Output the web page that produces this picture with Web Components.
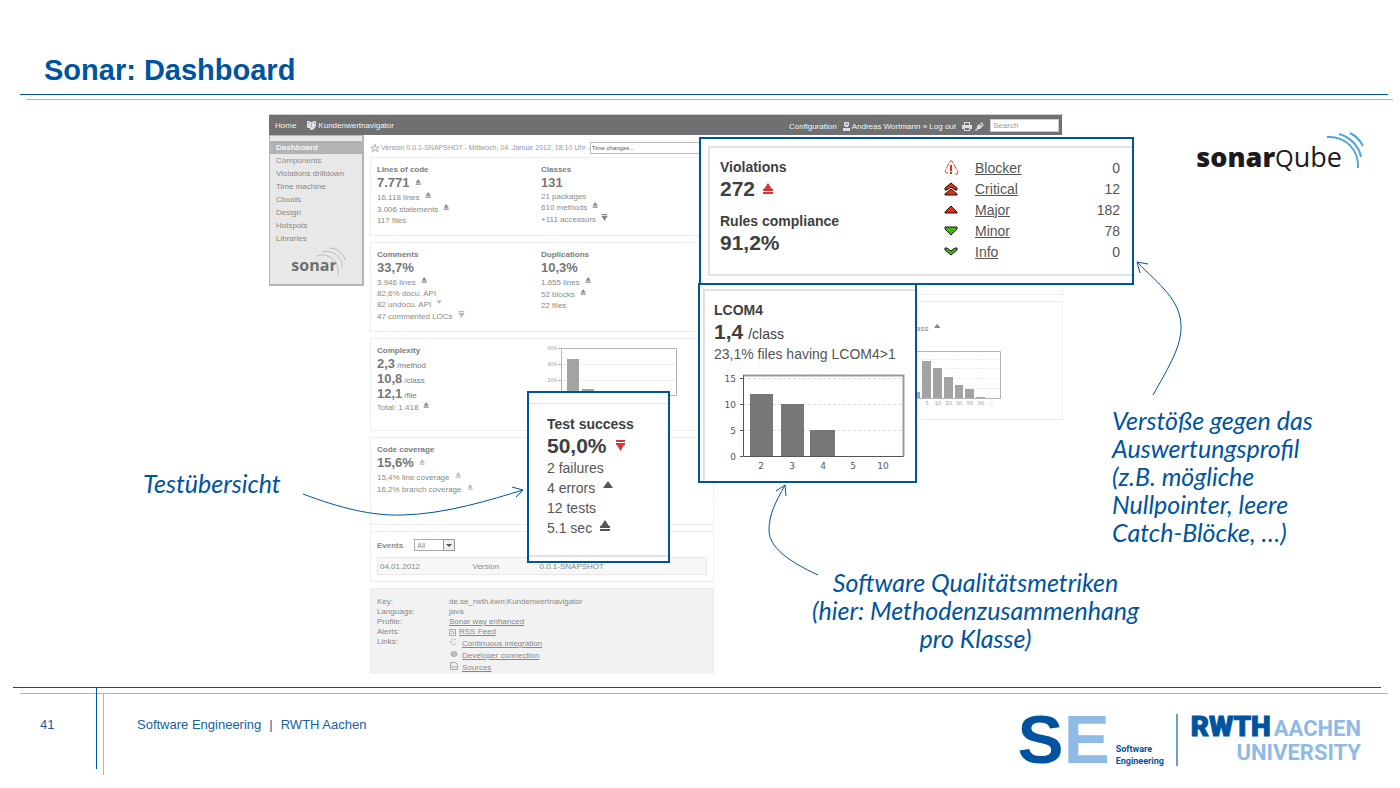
<!DOCTYPE html>
<html lang="de">
<head>
<meta charset="utf-8">
<title>Sonar: Dashboard</title>
<style>
  body { margin: 0; background: #fff; font-family: "Liberation Sans", Arial, sans-serif; color: #777; }
</style>
</head>
<body>
<slide-page></slide-page>

<script>
const define = (name, html, setup) => {
  const template = document.createElement('template');
  template.innerHTML = html;
  customElements.define(name, class extends HTMLElement {
    constructor() {
      super();
      this.attachShadow({ mode: 'open' }).append(template.content.cloneNode(true));
    }
    connectedCallback() { if (setup) setup(this, this.shadowRoot); }
  });
};

/* Trend triangle: direction and number of bars */
const trendShapes = {
  up: '<path d="M5 1 10 8H0z"/>',
  up1: '<path d="M5 0 9 6H1zM1 7h8v2H1z"/>',
  up2: '<path d="M5 0 9 6H1zM0 6h10v2H0zM0 9h10v2H0z"/>',
  down: '<path d="M1 2h8L5 8z"/>',
  down2: '<path d="M1 0h9v2H1zM1 3h9v2H1zM2 5h7L5.500 11z"/>'
};
define('trend-mark', `
<style>:host{display:block;width:var(--mark,7px);height:var(--mark,7px)}svg{display:block;width:100%;height:100%;fill:currentColor}</style>
<svg viewBox="0 0 11 11" aria-hidden="true"></svg>`, (el, root) => {
  root.querySelector('svg').innerHTML = trendShapes[el.getAttribute('kind')] || '';
});

/* One measure line: big value or plain text, with an optional trend */
define('measure-line', `
<style>
:host{display:flex;align-items:center;gap:var(--row-gap,5px);height:var(--row,10px);font-size:var(--text,8px);white-space:nowrap}
:host([trend]){height:var(--row-trend,12px)}
:host([big]){height:var(--row-big,14px);margin-bottom:2px;color:var(--strong,#777)}
:host([stacked]){height:15px;margin-bottom:0}
:host([big]) .value{font-size:var(--big,13px);font-weight:bold}
.unit:empty{display:none}
.copy{display:flex;align-items:baseline;gap:var(--unit-gap,2px)}
trend-mark{margin-bottom:var(--lift,3px);color:var(--trend,#888)}
:host([big]) trend-mark{margin-bottom:0}
:host([tone=red]) trend-mark{color:#d2383c}
:host([tone=pale]) trend-mark{color:#bbb}
</style>
<span class="copy"><span class="value"><slot></slot></span><span class="unit"></span></span>`, (el, root) => {
  root.querySelector('.unit').textContent = el.getAttribute('unit') || '';
  if (el.hasAttribute('trend') && !root.querySelector('trend-mark')) {
    const mark = document.createElement('trend-mark');
    mark.setAttribute('kind', el.getAttribute('trend'));
    root.append(mark);
  }
});

define('measure-group', `
<style>
:host{display:block;min-width:0}
h3{margin:0;font-size:var(--text,8px);line-height:var(--title-row,10px);font-weight:bold;color:var(--strong,#7c7c7c);white-space:nowrap}
</style>
<h3></h3><slot></slot>`, (el, root) => {
  root.querySelector('h3').textContent = el.getAttribute('label');
});

define('metric-box', `
<style>
:host{display:grid;grid-template-columns:164px 1fr;align-items:start;box-sizing:border-box;padding:7px 6px 5px;border:1px solid #eee;background:#fff;color:#8a8a8a}
</style><slot></slot>`);

define('complexity-chart', `
<style>:host{display:block}svg{display:block}text{font:5px "DejaVu Sans",sans-serif;fill:#999;text-anchor:end}</style>
<svg width="140" height="64" viewBox="0 1 140 64" role="img" aria-label="Complexity distribution">
<path d="M20 19.5h116M20 35.5h116" stroke="#ececec" stroke-dasharray="2 1"/>
<path d="M26 14h12v37H26zM41 44h12v7H41z" fill="#a3a3a3"/>
<path d="M20.500 3.500h115v47h-115zM17 3.500h3M17 19.500h3M17 35.500h3" fill="none" stroke="#b5b5b5"/>
<text x="16" y="5">600</text><text x="16" y="21">400</text><text x="16" y="37">200</text>
</svg>`);

define('class-chart', `
<style>:host{display:block}svg{display:block}text{font:5px "DejaVu Sans",sans-serif;fill:#999;text-anchor:middle}</style>
<svg width="110" height="60" viewBox="0 0 110 60" role="img" aria-label="Complexity per class">
<path d="M0 9.500h108M0 18.500h108M0 28.500h108M0 38.500h108" stroke="#ececec" stroke-dasharray="2 1"/>
<path d="M20 42h8v6h-8zM30 11h9v37h-9zM41 18h9v30h-9zM52 27h9v21h-9zM63 35h8v13h-8zM73 39h9v9h-9zM84 47h9v1h-9z" fill="#a3a3a3"/>
<path d="M.500 1.500h108v47H.500z" fill="none" stroke="#b5b5b5"/>
<text x="24" y="55">3</text><text x="35" y="55">5</text><text x="46" y="55">10</text><text x="57" y="55">20</text><text x="67" y="55">30</text><text x="78" y="55">50</text><text x="89" y="55">90</text><text x="99" y="55">...</text>
</svg>`);

define('cohesion-chart', `
<style>:host{display:block;margin-top:1px}svg{display:block}text{font:9px "DejaVu Sans",sans-serif;fill:#555}.y{text-anchor:end}.x{text-anchor:middle}</style>
<svg width="192" height="108" viewBox="0 0 192 108" role="img" aria-label="LCOM4 distribution">
<path d="M29 14.500h160M29 40.500h160M29 66.500h160" stroke="#ddd" stroke-dasharray="3 2"/>
<path d="M36 30h23v62H36zM67 40h23v52H67zM96 66h25v26H96z" fill="#777"/>
<path d="M29.500 11.500h160v81" fill="none" stroke="#999" stroke-width="2"/>
<path d="M29.500 11v81.500h160M26 14.500h3M26 40.500h3M26 66.500h3M26 92.500h3" fill="none" stroke="#555"/>
<g class="y"><text x="22" y="18">15</text><text x="22" y="44">10</text><text x="22" y="70">5</text><text x="22" y="96">0</text></g>
<g class="x"><text x="47" y="105">2</text><text x="78" y="105">3</text><text x="109" y="105">4</text><text x="139" y="105">5</text><text x="169" y="105">10</text></g>
</svg>`);

define('app-bar', `
<style>
:host{display:flex;align-items:center;box-sizing:border-box;height:20px;padding:0 3px 0 6px;background:#707070;color:#f4f4f4;font-size:8px;white-space:nowrap}
nav,.tools{display:flex;align-items:center}
nav{gap:11px;flex:1}
a{color:inherit;text-decoration:none;display:flex;align-items:center;gap:2px}
svg{display:block;fill:#ddd}
.user{margin-left:6px}
.tools{gap:3px;margin:2px 6px 0 6px}
.account{display:flex;align-items:center;margin-top:2px}
input{box-sizing:border-box;width:69px;height:13px;margin:0;padding:0 2px;border:1px solid #ccc;border-radius:0;background:#fff;font:8px "Liberation Sans",Arial,sans-serif}
input::placeholder{color:#999;opacity:1}
</style>
<nav aria-label="Projekt"><a href="#home">Home</a>
<a href="#projekt"><svg width="9" height="9" viewBox="0 0 9 9"><path d="M0 0h3v7H0zM3 1h3v8H3zM6 0h3v5L7 8H6z"/><path d="M1 2h1M4 3h1M4 5h1M7 2h1" stroke="#777"/></svg>Kundenwertnavigator</a></nav>
<div class="account"><a href="#configuration">Configuration</a>
<a class="user" href="#user"><svg width="7" height="9" viewBox="0 0 7 9"><path d="M1 0h5v4H1zM0 6h7v3H0zM2 4h3v1H2z"/><path d="M2 2h3" stroke="#777"/></svg><span>Andreas Wortmann » Log out</span></a></div>
<div class="tools"><svg width="10" height="9" viewBox="0 0 10 9"><path d="M2 0h6v3h2v4H8v2H2V7H0V3h2z"/><path d="M3 1h4v2H3zM3 6h4v2H3z" fill="#707070"/></svg>
<svg width="9" height="9" viewBox="0 0 9 9"><path d="M4 2l3 3-2 2H3L2 6V4zM0 8l2-2 1 1-2 2zM5 2 7 0l1 1-2 2zM6 4l2-2 1 1-2 2z"/></svg></div>
<input type="search" placeholder="Search" aria-label="Search">`);

define('side-nav', `
<style>
:host{display:block;box-sizing:border-box;width:95px;height:151px;padding-top:5px;border:1px solid #b5b5b5;border-width:1px 2px 2px 1px;background:#e8e8e8;color:#888;font-size:8px}
a{display:block;padding:0 6px;line-height:13px;color:inherit;text-decoration:none;white-space:nowrap}
a[aria-current]{background:#b3b3b3;color:#f6f6f6;font-weight:bold}
.logo{display:flex;justify-content:center;padding:0 0 0 6px;height:30px;align-items:end;margin-top:2px}
b{font:bold 16px/24px "Open Sans","Noto Sans",sans-serif;color:#707070}
svg{flex:none;margin-left:-20px}
</style>
<nav aria-label="Bereiche"><a href="#dashboard" aria-current="page">Dashboard</a><a href="#components">Components</a><a href="#violations">Violations drilldown</a><a href="#time">Time machine</a><a href="#clouds">Clouds</a><a href="#design">Design</a><a href="#hotspots">Hotspots</a><a href="#libraries">Libraries</a></nav>
<div class="logo"><b>sonar</b><svg width="30" height="30" viewBox="0 0 30 30" fill="none" stroke="#bbb"><path d="M0 9C10 5 23 13 21 28M5 5C16 2 26 11 25 20M12 1C20 1 27 7 28 13"/></svg></div>`);

define('version-bar', `
<style>
:host{display:flex;align-items:center;height:13px;font-size:7px;color:#999;white-space:nowrap}
svg{margin-right:1px}
select{appearance:none;box-sizing:border-box;width:120px;height:12px;margin:0;padding:0 1px;border:1px solid #bbb;border-radius:0;background:#fff;color:#555;font:6px "Liberation Sans",Arial,sans-serif}
</style>
<svg width="10" height="10" viewBox="0 0 10 10" fill="#eee" stroke="#bbb"><path d="M5 1l1 3h3L7 6l1 3-3-2-3 2 1-3-2-2h3z"/></svg>
<label for="period">Version 0.0.1-SNAPSHOT - Mittwoch, 04. Januar 2012, 18:10 Uhr -</label>
<select id="period"><option>Time changes...</option></select>`);

define('events-box', `
<style>
:host{display:block;box-sizing:border-box;border:1px solid #eee;background:#fff;padding:6px;font-size:8px;color:#8a8a8a}
.head{display:flex;align-items:center;gap:11px;height:14px}
label{font-weight:bold}
.pick{display:grid}
.pick>*{grid-area:1/1}
select{appearance:none;box-sizing:border-box;width:41px;height:12px;margin:0;padding:0 2px;border:1px solid #aaa;border-radius:0;background:#fff;color:#888;font:7px "Liberation Sans",Arial,sans-serif}
svg{justify-self:end;pointer-events:none}
table{width:100%;height:18px;margin-top:5px;border-collapse:collapse;border:1px solid #e8e8e8;background:#f7f7f7}
td{padding:0 0 0 2px}
</style>
<div class="head"><label for="kind">Events</label><span class="pick"><select id="kind"><option>All</option></select><svg width="12" height="12" viewBox="0 0 12 12"><path d="M.500.500h11v11H.500z" fill="#eee" stroke="#999"/><path d="M3 5h6L6 8z" fill="#555"/></svg></span></div>
<table><colgroup><col style="width:93px"><col style="width:67px"><col></colgroup><tbody><tr><td>04.01.2012</td><td>Version</td><td>0.0.1-SNAPSHOT</td></tr></tbody></table>`);

define('project-info', `
<style>
:host{display:block;box-sizing:border-box;border:1px solid #ececec;border-bottom:0;background:#f2f2f2;padding:8px 6px 0;font-size:8px;line-height:10px;color:#888}
dl{display:grid;grid-template-columns:72px 1fr;margin:0}
dt,dd{margin:0}
a{color:inherit}
.icon{display:flex;align-items:center;gap:3px}
ul{list-style:none;margin:0;padding:1px 0 0 1px}
li{display:flex;gap:4px;height:12px;line-height:12px}
svg{flex:none;fill:#eee;stroke:#aaa}
</style>
<dl><dt>Key:</dt><dd>de.se_rwth.kwn:Kundenwertnavigator</dd>
<dt>Language:</dt><dd>java</dd>
<dt>Profile:</dt><dd><a href="#profile">Sonar way enhanced</a></dd>
<dt>Alerts:</dt><dd class="icon"><svg width="7" height="7" viewBox="0 0 7 7"><path d="M.500.500h6v6h-6zM2 2q3 0 3 3M2 4l1 1"/></svg><a href="#rss">RSS Feed</a></dd>
<dt>Links:</dt><dd><ul>
<li><svg width="8" height="8" viewBox="0 0 8 8"><path d="M6 2A3 3 0 1 0 6 6" stroke-dasharray="2 1"/></svg><a href="#ci">Continuous integration</a></li>
<li><svg width="8" height="8" viewBox="0 0 8 8"><ellipse cx="4" cy="4" rx="3" ry="2.500" fill="#ccc"/><path d="M1 4h6"/></svg><a href="#dev">Developer connection</a></li>
<li><svg width="8" height="8" viewBox="0 0 8 8"><path d="M.500.500h5l2 2v5h-7zM1 5h6"/></svg><a href="#sources">Sources</a></li></ul></dd></dl>`);

define('sonar-dashboard', `
<style>
:host{display:block;border-top:1px solid #ccc}
.bar{margin-right:1px}
.body{display:flex;gap:6px}
.content{flex:1;min-width:0;padding-top:6px}
.columns{display:grid;grid-template-columns:1fr 1fr;gap:6px;margin-top:3px}
.column{display:grid;gap:6px;align-content:start}
.h78{min-height:79px}.h90{min-height:90px}.h93{min-height:93px}.h88{min-height:88px}.h51{height:51px}.h86{height:86px}.h138{min-height:138px}.h120{min-height:119px}
.indent{padding:13px 0 0 160px}
.indent measure-line{margin-bottom:16px;justify-content:end;width:54px}
class-chart{margin-left:5px}
.wide{grid-template-columns:1fr}
</style>
<app-bar class="bar"></app-bar>
<div class="body"><side-nav></side-nav>
<div class="content"><version-bar></version-bar>
<div class="columns"><div class="column">
<metric-box class="h78"><measure-group label="Lines of code"><measure-line big trend="up1">7.771</measure-line><measure-line trend="up1">16.118 lines</measure-line><measure-line trend="up1">3.006 statements</measure-line><measure-line>117 files</measure-line></measure-group>
<measure-group label="Classes"><measure-line big>131</measure-line><measure-line>21 packages</measure-line><measure-line trend="up1">610 methods</measure-line><measure-line trend="down2">+111 accessors</measure-line></measure-group></metric-box>
<metric-box class="h90"><measure-group label="Comments"><measure-line big>33,7%</measure-line><measure-line trend="up1">3.946 lines</measure-line><measure-line>82,6% docu. API</measure-line><measure-line trend="down" tone="pale">82 undocu. API</measure-line><measure-line trend="down2" tone="pale">47 commented LOCs</measure-line></measure-group>
<measure-group label="Duplications"><measure-line big>10,3%</measure-line><measure-line trend="up1">1.655 lines</measure-line><measure-line trend="up1">52 blocks</measure-line><measure-line>22 files</measure-line></measure-group></metric-box>
<metric-box class="h93"><measure-group label="Complexity"><measure-line big stacked unit="/method">2,3</measure-line><measure-line big stacked unit="/class">10,8</measure-line><measure-line big stacked unit="/file">12,1</measure-line><measure-line trend="up1">Total: 1.418</measure-line></measure-group><complexity-chart></complexity-chart></metric-box>
<metric-box class="h88"><measure-group label="Code coverage"><measure-line big trend="up1" tone="pale">15,6%</measure-line><measure-line trend="up1" tone="pale">15,4% line coverage</measure-line><measure-line trend="up1" tone="pale">16,2% branch coverage</measure-line></measure-group></metric-box>
<events-box class="h51"></events-box>
<project-info class="h86"></project-info>
</div><div class="column">
<metric-box class="h138"></metric-box>
<metric-box class="h120 wide"><div class="indent"><measure-line trend="up">/class</measure-line><class-chart></class-chart></div></metric-box>
</div></div></div></div>`);

/* Blue-framed magnified detail lying over the dashboard */
define('callout-box', `
<style>
:host{position:absolute;box-sizing:border-box;overflow:hidden;border:2px solid #00549f;background:#fff;color:#555;
--text:14px;--title-row:20px;--row:18px;--row-trend:22px;--row-big:23px;--big:21px;--strong:#404040;--mark:11px;--row-gap:8px;--unit-gap:5px;--lift:6px;--trend:#555}
</style><slot></slot>`);

define('violations-panel', `
<style>
:host{display:flex;justify-content:space-between;box-sizing:border-box;height:130px;margin:7px 0 0 7px;padding:9px 12px 0 10px;border:solid #e2e2e2;border-width:2px 0 2px 2px;font-size:14px}
.left{display:grid;align-content:start;gap:9px}
table{border-collapse:collapse;width:176px;height:105px}
td{height:21px;padding:0;text-align:right}
th{padding:0;text-align:left;font-weight:normal}
td:first-child{width:31px}
a{color:inherit}
svg{display:block}
</style>
<div class="left"><measure-group label="Violations"><measure-line big trend="up2" tone="red">272</measure-line></measure-group>
<measure-group label="Rules compliance"><measure-line big>91,2%</measure-line></measure-group></div>
<table><tbody>
<tr><td><svg width="15" height="16" viewBox="0 0 15 16"><path d="M4 13H2L1 11 6 1h2l6 11-1 2h-2" fill="none" stroke="#e24a3b" stroke-dasharray="6 1"/><path d="M6 5h2v6H6zM6 12h2v2H6z" fill="#dc2c1c"/></svg></td><th scope="row"><a href="#blocker">Blocker</a></th><td>0</td></tr>
<tr><td><svg width="14" height="14" viewBox="0 0 14 14" fill="#e52e15" stroke="#151515"><path d="M7 1 1 6v2h2l4-3 4 3h2V6z"/><path d="M7 7 1 12v1h12v-1z"/></svg></td><th scope="row"><a href="#critical">Critical</a></th><td>12</td></tr>
<tr><td><svg width="14" height="14" viewBox="0 0 14 14" fill="#e52e15" stroke="#151515"><path d="M7 3 1 9v1h12V9z"/></svg></td><th scope="row"><a href="#major">Major</a></th><td>182</td></tr>
<tr><td><svg width="14" height="14" viewBox="0 0 14 14" fill="#3fb519" stroke="#151515"><path d="M1 3h12v2l-6 6-6-6z"/></svg></td><th scope="row"><a href="#minor">Minor</a></th><td>78</td></tr>
<tr><td><svg width="14" height="14" viewBox="0 0 14 14" fill="#3fb519" stroke="#151515"><path d="M1 3h2l4 3 4-3h2v2l-6 5-6-5z"/></svg></td><th scope="row"><a href="#info">Info</a></th><td>0</td></tr>
</tbody></table>`);

define('cohesion-panel', `
<style>
:host{display:block;height:100%;box-sizing:border-box;margin:4px 0 0 3px;padding:9px 0 0 9px;border:solid #e2e2e2;border-width:2px 0 0 2px}
</style>
<measure-group label="LCOM4"><measure-line big unit="/class">1,4</measure-line><measure-line>23,1% files having LCOM4&gt;1</measure-line></measure-group><cohesion-chart></cohesion-chart>`);

define('tests-panel', `
<style>:host{display:block;box-sizing:border-box;height:154px;margin-top:10px;padding:10px 0 0 18px;border:solid #e2e2e2;border-width:1px 0 2px}</style>
<measure-group label="Test success"><measure-line big trend="down2" tone="red">50,0%</measure-line><measure-line>2 failures</measure-line><measure-line trend="up">4 errors</measure-line><measure-line>12 tests</measure-line><measure-line trend="up2">5.1 sec</measure-line></measure-group>`);

define('figure-note', `
<style>:host{position:absolute;font:italic 25px/28px Lato,"Open Sans",sans-serif;color:#00549f;white-space:nowrap}</style><slot></slot>`);

define('annotated-figure', `
<style>
:host{display:block;position:relative}
.violations{left:430px;top:23px;width:435px;height:148px}
.cohesion{left:429px;top:169px;width:219px;height:200px}
.tests{left:258px;top:277px;width:143px;height:172px}
.arrows{position:absolute;left:0;top:0;overflow:visible;pointer-events:none}
.n1{left:-126px;top:355px}
.n2{left:543px;top:454px;text-align:center}
.n3{left:843px;top:292px}
</style>
<sonar-dashboard></sonar-dashboard>
<callout-box class="violations"><violations-panel></violations-panel></callout-box>
<callout-box class="cohesion"><cohesion-panel></cohesion-panel></callout-box>
<callout-box class="tests"><tests-panel></tests-panel></callout-box>
<svg class="arrows" width="794" height="560" fill="none" stroke="#00549f" aria-hidden="true"><g transform="translate(-269 -114)">
<path d="M303 494C340 508 372 516 402 515C446 514 490 500 523 490M512 487 523 490 516 497"/>
<path d="M818 575C790 562 769 548 769 530C769 515 775 503 785 485M776 491 785 485 786 496"/>
<path d="M1153 395C1170 365 1182 345 1181 325C1180 300 1160 285 1137 262M1140 273 1137 262 1148 264"/></g></svg>
<figure-note class="n1">Testübersicht</figure-note>
<figure-note class="n2">Software Qualitätsmetriken<br>(hier: Methodenzusammenhang<br>pro Klasse)</figure-note>
<figure-note class="n3">Verstöße gegen das<br>Auswertungsprofil<br>(z.B. mögliche<br>Nullpointer, leere<br>Catch-Blöcke, …)</figure-note>`);

define('sonarqube-logo', `
<style>
:host{display:flex;align-items:start;color:#1d191c;font:27px/36px "Open Sans","Noto Sans",sans-serif}
.word{padding-top:7px}
b{font-weight:800}
.lens{font-size:24px}
svg{margin-left:-16px}
</style>
<span class="word"><b>sonar</b><span class="lens">Q</span>ube</span>
<svg width="38" height="38" viewBox="0 0 38 38" fill="none" stroke="#4ea5dc" stroke-width="2"><path d="M1 5C20 4 33 18 32 36M13 2C24 5 33 14 35 25M24 1C30 4 34 8 37 14"/></svg>`);

define('slide-header', `
<style>
:host{display:block}
h1{margin:0;padding:52px 44px 6px;font-size:29px;line-height:36px;color:#00549f}
.dark{height:1px;margin:0 12px 0 20px;background:#00549f}
.light{height:1px;margin:4px 7px 0 26px;background:#8ebae5}
</style>
<h1>Sonar: Dashboard</h1><div class="dark"></div><div class="light"></div>`);

define('se-logo', `
<style>
:host{display:flex;align-items:end;color:#00549f;font-weight:bold}
.se{font-size:69px;line-height:54px}
.e{color:#8ebae5}
.name{width:48px;margin-left:6px;font:bold 9px/12px Roboto,"Liberation Sans",sans-serif}
</style>
<span class="se">S<span class="e">E</span></span><span class="name">Software<br>Engineering</span>`);

define('rwth-logo', `
<style>
:host{display:grid;grid-template-rows:26px 26px;justify-items:end;padding-left:13px;border-left:2px solid #6d9fcc;color:#8ebae5;font:bold 22px/26px Roboto,"Liberation Sans",sans-serif;white-space:nowrap}
b{color:#00549f;font-size:28px;font-weight:900;-webkit-text-stroke:1px #00549f}
.top{display:flex;align-items:baseline;gap:3px}
</style>
<span class="top"><b>RWTH</b><span>AACHEN</span></span><span>UNIVERSITY</span>`);

define('slide-footer', `
<style>
:host{display:grid;grid-template-columns:83px 1fr auto;height:101px;margin-left:13px;color:#1561a8;font-size:13px;position:relative}
.dark{position:absolute;left:0;right:19px;top:0;height:1px;background:#00549f}
.light{position:absolute;left:7px;right:12px;top:6px;height:1px;background:#8ebae5}
.page{padding:30px 0 0 27px;line-height:15px}
.text{display:flex;gap:8px;align-items:start;position:relative;padding:30px 0 0 41px;line-height:15px}
.text::before{content:"";position:absolute;left:0;top:0;width:1px;height:82px;background:#00549f}
.text::after{content:"";position:absolute;left:7px;top:6px;width:1px;height:82px;background:#8ebae5}
.logos{display:flex;gap:12px;align-items:start;padding:27px 39px 0 0}
se-logo{height:53px}
rwth-logo{height:52px}
</style>
<div class="dark"></div><div class="light"></div>
<div class="page">41</div>
<div class="text"><span>Software Engineering</span><span>|</span><span>RWTH Aachen</span></div>
<div class="logos"><se-logo></se-logo><rwth-logo></rwth-logo></div>`);

define('slide-page', `
<style>
:host{display:flex;flex-direction:column;min-height:100vh}
main{flex:1;display:grid;grid-template-columns:269fr 794fr 337fr;align-items:start;padding-top:14px;box-sizing:border-box}
annotated-figure{grid-column:2}
sonarqube-logo{justify-self:end;margin:18px 36px 0 0}
</style>
<slide-header></slide-header>
<main><annotated-figure></annotated-figure><sonarqube-logo></sonarqube-logo></main>
<slide-footer></slide-footer>`);
</script>
</body>
</html>
